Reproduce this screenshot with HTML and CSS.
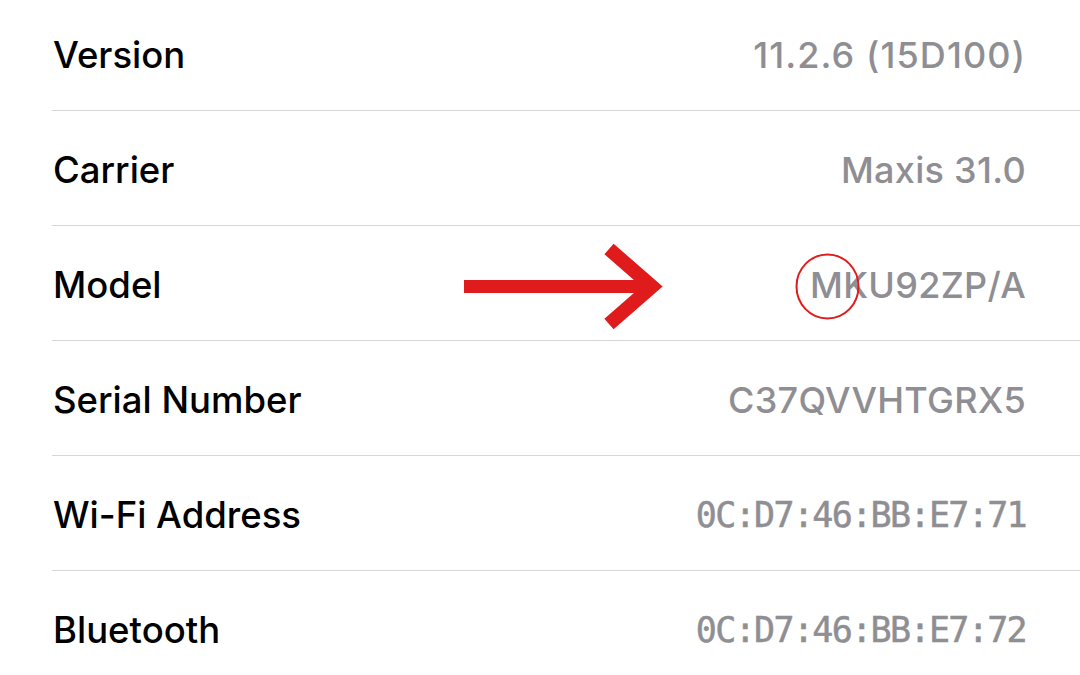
FILE: index.html
```html
<!DOCTYPE html>
<html lang="en">
<head>
<meta charset="utf-8">
<title>About</title>
<link rel="stylesheet" href="styles.css">
</head>
<body>
<div class="page">
  <ul class="list">
    <li class="row"><span class="label">Version</span><span class="value wide">11.2.6 (15D100)</span></li>
    <li class="row"><span class="label">Carrier</span><span class="value">Maxis 31.0</span></li>
    <li class="row"><span class="label">Model</span><span class="value">MKU92ZP/A</span></li>
    <li class="row"><span class="label">Serial Number</span><span class="value">C37QVVHTGRX5</span></li>
    <li class="row"><span class="label">Wi-Fi Address</span><span class="value mono">0C:D7:46:BB:E7:71</span></li>
    <li class="row"><span class="label">Bluetooth</span><span class="value mono">0C:D7:46:BB:E7:72</span></li>
  </ul>
  <svg class="annotation" width="1080" height="675" viewBox="0 0 1080 675" aria-hidden="true">
    <rect x="464" y="280" width="186" height="13" fill="#e01b1c"/>
    <polyline points="609,249 652,286.5 609,324" fill="none" stroke="#e01b1c" stroke-width="14" stroke-linejoin="miter" stroke-miterlimit="10"/>
    <ellipse cx="827.5" cy="286.5" rx="31" ry="32" fill="none" stroke="#e01b1c" stroke-width="2"/>
  </svg>
</div>
</body>
</html>
```
FILE: styles.css
```css
* { box-sizing: border-box; }
html, body {
  margin: 0;
  padding: 0;
  background: #ffffff;
}
.page {
  position: relative;
  width: 1080px;
  height: 675px;
  overflow: hidden;
  font-family: "Inter", "Liberation Sans", sans-serif;
}
.list {
  list-style: none;
  margin: -4px 0 0 0;
  padding: 0;
}
.row {
  display: flex;
  align-items: center;
  justify-content: space-between;
  height: 115px;
  margin-left: 52px;
  padding: 3px 54px 0 1px;
  border-bottom: 1px solid #d6d6d8;
}
.label {
  font-size: 36.5px;
  font-weight: 500;
  color: #000000;
  letter-spacing: 0;
}
.value {
  font-size: 36px;
  font-weight: 500;
  color: #8e8e93;
  letter-spacing: 0.3px;
}
.wide {
  letter-spacing: 1.1px;
}
.mono {
  font-family: "DejaVu Sans Mono", "Liberation Mono", monospace;
  font-size: 35px;
  font-weight: 400;
  letter-spacing: -1.65px;
  -webkit-text-stroke: 0.5px #8e8e93;
}
.annotation {
  position: absolute;
  left: 0;
  top: 0;
}
```
